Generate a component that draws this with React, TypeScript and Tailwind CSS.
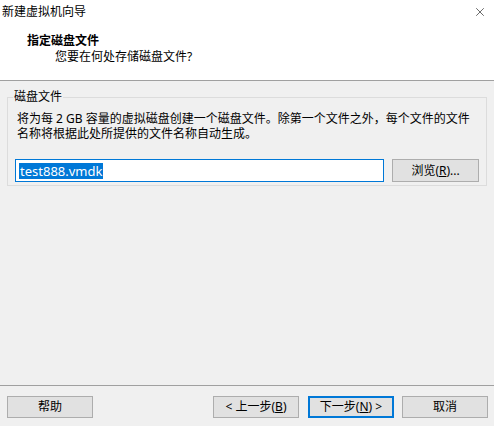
import { X } from 'lucide-react'

const font = "font-['Microsoft_YaHei_UI','Noto_Sans','Noto_Sans_CJK_SC',sans-serif]"

function Btn({ children, primary = false }: { children: React.ReactNode; primary?: boolean }) {
  return (
    <button
      className={
        'w-[86px] h-[22px] bg-[#e1e1e1] text-[12px] leading-none text-black flex items-center justify-center ' +
        (primary ? 'border-2 border-[#0078d7]' : 'border border-[#adadad]')
      }
    >
      {children}
    </button>
  )
}

export default function App() {
  return (
    <div className={`w-[494px] h-[426px] bg-[#f0f0f0] flex flex-col text-black ${font}`}>
      {/* header */}
      <div className="h-[81px] bg-white border-b border-[#a0a0a0] flex flex-col">
        <div className="h-[24px] flex items-center justify-between pl-[2px] pr-[7px]">
          <span className="text-[12px] leading-none">新建虚拟机向导</span>
          <X size={14} strokeWidth={1} />
        </div>
        <div className="pl-[27px] pt-[9px] text-[12px] font-bold leading-[15px]">指定磁盘文件</div>
        <div className="pl-[55px] pt-[1px] text-[12px] leading-[15px]">您要在何处存储磁盘文件?</div>
      </div>

      {/* group box */}
      <div className="relative mx-[7px] mt-[16px] h-[89px] border border-[#dcdcdc] pl-[9px] pr-[7px] pt-[13px]">
        <span className="absolute left-[5px] top-[-9px] px-[1px] bg-[#f0f0f0] text-[12px] leading-[15px]">磁盘文件</span>
        <p className="text-[12px] leading-[15px]">
          将为每 2 GB 容量的虚拟磁盘创建一个磁盘文件。除第一个文件之外，每个文件的文件名称将根据此处所提供的文件名称自动生成。
        </p>
        <div className="flex items-center gap-[8px] mt-[18px] -ml-[2px]">
          <div className="w-[370px] h-[23px] border border-[#0078d7] bg-white flex items-center pl-[3px]">
            <span className="bg-[#0078d7] text-white text-[13px] leading-[16px] px-[1px]">test888.vmdk</span>
          </div>
          <button className="w-[87px] h-[23px] bg-[#e1e1e1] border border-[#adadad] text-[12px] leading-none flex items-center justify-center">
            浏览(<span className="underline">R</span>)...
          </button>
        </div>
      </div>

      <div className="flex-1" />

      {/* footer */}
      <div className="border-t border-[#a0a0a0] h-[41px] flex items-start pt-[10px] pl-[7px] pr-[6px]">
        <Btn>帮助</Btn>
        <div className="ml-auto flex gap-[9px]">
          <Btn>
            &lt; 上一步(<span className="underline">B</span>)
          </Btn>
          <Btn primary>
            下一步(<span className="underline">N</span>) &gt;
          </Btn>
          <div className="ml-[-1px]">
            <Btn>取消</Btn>
          </div>
        </div>
      </div>
    </div>
  )
}
